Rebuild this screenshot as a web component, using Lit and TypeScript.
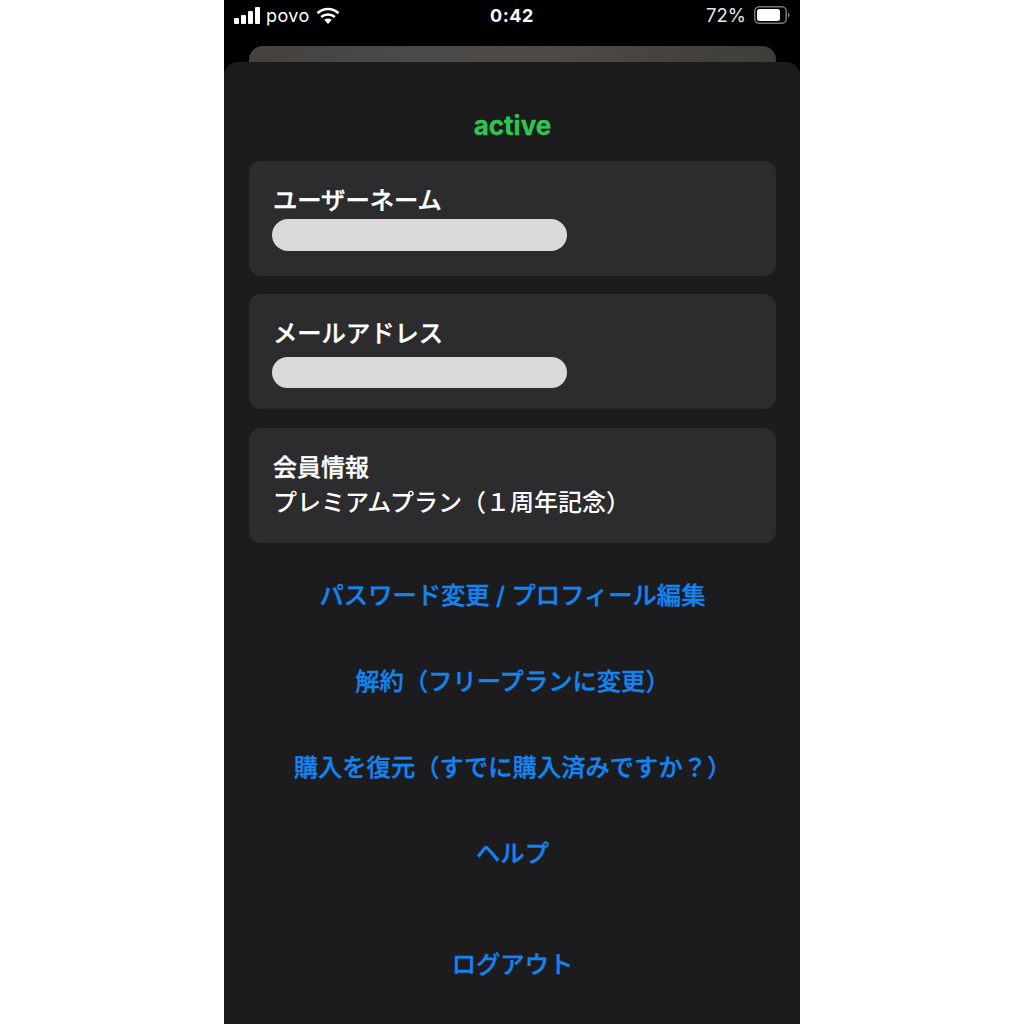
import { LitElement, html, css } from "lit";
import { customElement } from "lit/decorators.js";

@customElement("app-root")
export class AppRoot extends LitElement {
  static styles = css`
    :host { display: block; width: 1024px; height: 1024px; background: #fff; overflow: hidden;
      font-family: "Inter", "Noto Sans CJK JP", sans-serif; }
    .phone { width: 576px; height: 1024px; margin: 0 auto; background: #000; display: flex; flex-direction: column; overflow: hidden; }
    .status { height: 46px; flex: none; display: grid; grid-template-columns: 1fr auto 1fr; align-items: center; padding: 0 10px 16px; box-sizing: border-box; color: #fff; font-size: 18px; }
    .status > * { display: flex; align-items: center; }
    .left { gap: 6px; letter-spacing: .4px; }
    .right { justify-content: flex-end; gap: 8px; color: #e8e8e8; font-size: 18.5px; }
    .time { font-weight: 700; font-size: 18px; letter-spacing: .6px; }
    .behind { height: 16px; flex: none; margin: 0 24px 0 25px; border-radius: 14px 14px 0 0;
      background: linear-gradient(90deg, #45413d 0%, #49494b 30%, #4f4a44 55%, #3e3d38 100%); }
    .sheet { flex: 1; background: #1c1c1e; border-radius: 14px 14px 0 0; padding: 0 24px 0 25px; display: flex; flex-direction: column; }
    .title { margin: 46px 0 18px; height: 35px; line-height: 35px; text-align: center; color: #30c552; font-size: 26px; font-weight: 700; -webkit-text-stroke: .3px #30c552; }
    .cards { display: flex; flex-direction: column; gap: 18.3px; }
    .card { height: 115px; box-sizing: border-box; background: #2c2c2e; border-radius: 12px; padding: 22px 24px 0; color: #fff; font-size: 24.3px; line-height: 35px; }
    .card b { display: block; font-weight: 500; -webkit-text-stroke: .35px #fff; }
    .pill { margin: 1px 0 0 -1px; width: 295px; height: 31.5px; border-radius: 16px; background: #d9d9d9; }
    .pill.low { margin-top: 5.500px; }
    .info { font-size: 24px; font-weight: 500; padding-top: 22px; }
    .info span { display: block; white-space: nowrap; }
    .links { display: flex; flex-direction: column; align-items: center; margin-top: 35px; }
    .links a { height: 86px; line-height: 35px; color: #1484f0; font-size: 24.3px; font-weight: 500; -webkit-text-stroke: .35px #1484f0; white-space: nowrap; }
    .links a:last-child { margin-top: 25px; }
  `;
  render() {
    const links = ["パスワード変更 / プロフィール編集", "解約（フリープランに変更）", "購入を復元（すでに購入済みですか？）", "ヘルプ", "ログアウト"];
    return html`<div class="phone">
      <div class="status">
        <div class="left">
          <svg width="26" height="17" viewBox="0 0 26 17" fill="#fff"><rect x="0" y="11" width="5" height="6" rx="1"/><rect x="7" y="8" width="5" height="9" rx="1"/><rect x="14" y="4" width="5" height="13" rx="1"/><rect x="21" y="0" width="5" height="17" rx="1"/></svg>
          <span>povo</span>
          <svg width="24" height="17" viewBox="0 0 24 17" fill="none" stroke="#fff" stroke-width="2.6"><path d="M1.500 6.200C7.500 .6 16.500 .6 22.500 6.200"/><path d="M5.200 10C9 6.600 15 6.600 18.800 10"/><path d="M12 17l-3.800-4.200c2.200-1.600 5.400-1.600 7.600 0z" fill="#fff" stroke="none"/></svg>
        </div>
        <div class="time">0:42</div>
        <div class="right">
          <span>72%</span>
          <svg width="36" height="18" viewBox="0 0 36 18" fill="none"><rect x=".75" y=".75" width="31.500" height="16.500" rx="4.500" stroke="#777" stroke-width="1.500"/><rect x="3" y="3" width="23" height="12" rx="2.500" fill="#fff"/><path d="M34 6.500c1.200.4 1.600 1.400 1.600 2.500s-.4 2.100-1.600 2.500z" fill="#777"/></svg>
        </div>
      </div>
      <div class="behind"></div>
      <div class="sheet">
        <div class="title">active</div>
        <div class="cards">
          <div class="card"><b>ユーザーネーム</b><div class="pill"></div></div>
          <div class="card"><b>メールアドレス</b><div class="pill low"></div></div>
          <div class="card info"><b>会員情報</b><span>プレミアムプラン（１周年記念）</span></div>
        </div>
        <div class="links">${links.map((l) => html`<a>${l}</a>`)}</div>
      </div>
    </div>`;
  }
}
